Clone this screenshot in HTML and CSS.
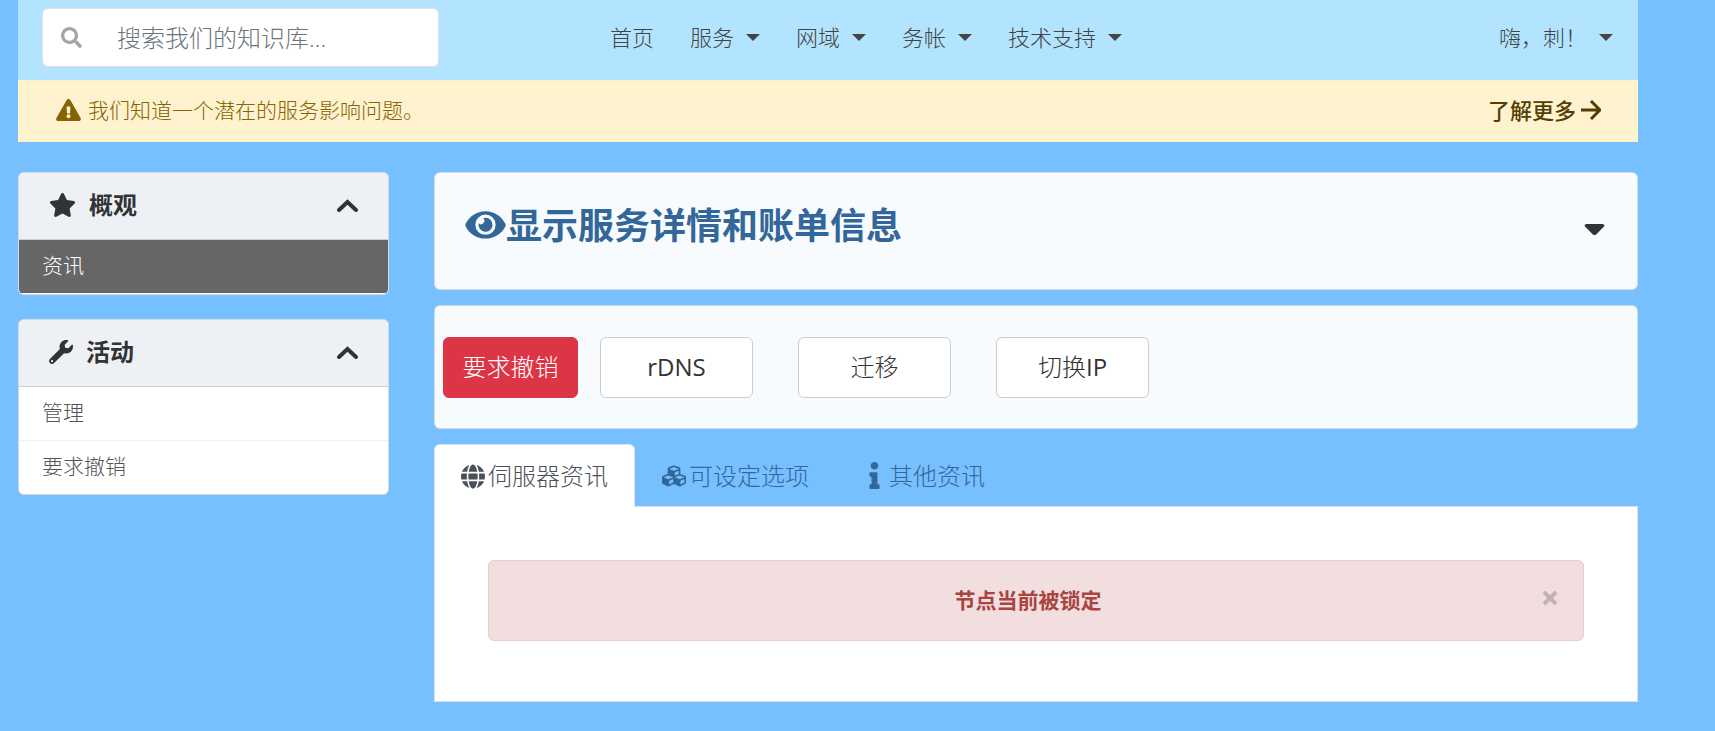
FILE: index.html
```html
<!DOCTYPE html>
<html lang="zh-CN">
<head>
<meta charset="utf-8">
<title>服务详情</title>
<link rel="stylesheet" href="styles.css">
</head>
<body>
<div class="page">
  <header class="topbar">
    <form class="search" role="search">
      <button class="search-button" type="submit" aria-label="搜索"><svg class="icon-search" viewBox="0 0 512 512"><path d="M505 442.7L405.3 343c-4.500-4.500-10.600-7-17-7H372c27.600-35.300 44-79.700 44-128C416 93.100 322.900 0 208 0S0 93.100 0 208s93.100 208 208 208c48.300 0 92.700-16.400 128-44v16.300c0 6.400 2.500 12.500 7 17l99.700 99.700c9.400 9.400 24.600 9.400 33.900 0l28.300-28.300c9.400-9.400 9.400-24.600.1-34zM208 336c-70.700 0-128-57.200-128-128 0-70.700 57.200-128 128-128 70.700 0 128 57.200 128 128 0 70.700-57.200 128-128 128z"/></svg></button>
      <input class="search-input" type="text" placeholder="搜索我们的知识库..." aria-label="搜索我们的知识库">
    </form>
    <nav class="nav">
      <a class="nav-link" href="#">首页</a>
      <a class="nav-link caret" href="#">服务</a>
      <a class="nav-link caret" href="#">网域</a>
      <a class="nav-link caret" href="#">务帐</a>
      <a class="nav-link caret" href="#">技术支持</a>
    </nav>
    <a class="nav-link caret account" href="#">嗨，刺！</a>
  </header>

  <div class="notice">
    <svg class="icon-warning" viewBox="0 0 576 512"><path d="M569.500 440C588 472 564.800 512 527.900 512H48.100c-36.900 0-60-40.100-41.600-72L246.400 24c18.500-32 64.700-32 83.200 0l239.900 416zM288 354c-25.400 0-46 20.600-46 46s20.600 46 46 46 46-20.600 46-46-20.600-46-46-46zm-43.700-165.300l7.400 136c.3 6.400 5.600 11.300 12 11.300h48.600c6.400 0 11.600-5 12-11.300l7.400-136c.4-6.900-5.100-12.700-12-12.700h-63.400c-6.900 0-12.400 5.800-12 12.700z"/></svg>
    <span class="notice-text">我们知道一个潜在的服务影响问题。</span>
    <a class="notice-more" href="#">了解更多<svg class="icon-arrow" viewBox="0 0 20 20"><path d="M0 10h18M10 1l9 9-9 9"/></svg></a>
  </div>

  <div class="columns">
    <aside class="sidebar">
      <section class="panel">
        <h3 class="panel-title"><svg class="icon-panel" viewBox="0 0 576 512"><path d="M259.300 17.800L194 150.200 47.900 171.500c-26.200 3.800-36.700 36.100-17.700 54.600l105.700 103-25 145.500c-4.500 26.300 23.200 46 46.400 33.700L288 439.600l130.700 68.700c23.200 12.200 50.900-7.400 46.400-33.700l-25-145.500 105.700-103c19-18.500 8.500-50.800-17.700-54.600L382 150.200 316.700 17.800c-11.700-23.600-45.600-23.900-57.400 0z"/></svg>概观
          <button class="toggle" type="button" aria-label="收起概观"><svg class="icon-chevron" viewBox="0 0 21 13"><path d="M2 11l8.500-8 8.500 8"/></svg></button></h3>
        <a class="panel-item active" href="#">资讯</a>
      </section>
      <section class="panel">
        <h3 class="panel-title"><svg class="icon-panel" viewBox="0 0 512 512"><path d="M507.700 109.100c-2.200-9-13.500-12.100-20.100-5.500l-74.400 74.400-67.900-11.300L334 98.900l74.400-74.400c6.600-6.600 3.400-17.900-5.700-20.200-47.400-11.700-99.600.9-136.600 37.900-39.600 39.600-50.500 97.100-34.100 147.200L18.700 402.800c-25 25-25 65.500 0 90.500s65.500 25 90.500 0l213.200-213.200c50.100 16.700 107.500 5.700 147.400-34.200 37.100-37.100 49.700-89.300 37.900-136.800zM64 472c-13.200 0-24-10.700-24-24 0-13.200 10.700-24 24-24s24 10.700 24 24c0 13.200-10.700 24-24 24z"/></svg>活动
          <button class="toggle" type="button" aria-label="收起活动"><svg class="icon-chevron" viewBox="0 0 21 13"><path d="M2 11l8.500-8 8.500 8"/></svg></button></h3>
        <a class="panel-item" href="#">管理</a>
        <a class="panel-item" href="#">要求撤销</a>
      </section>
    </aside>

    <main class="main">
      <section class="card details">
        <h2 class="details-title"><svg class="icon-eye" viewBox="0 0 576 512"><path fill-rule="evenodd" d="M288 60C165 60 58 132 4 240q-6 16 0 32c54 108 161 176 284 176s230-68 284-176q6-16 0-32C518 132 411 60 288 60zM288 108a144 144 0 1 1 0 288a144 144 0 1 1 0-288z"/><path d="M288 152a100 100 0 1 1-98 80a48 48 0 1 0 66-72q15-8 32-8z"/></svg>显示服务详情和账单信息</h2>
        <button class="expand" type="button" aria-label="展开"><svg class="icon-down" viewBox="0 0 22 13"><path d="M2 0h18q3 1 1 3l-8 8q-2 2-4 0L1 3Q-1 1 2 0z"/></svg></button>
      </section>

      <section class="card actions">
        <button class="button danger" type="button">要求撤销</button>
        <button class="button" type="button"><span class="latin">rDNS</span></button>
        <button class="button" type="button">迁移</button>
        <button class="button" type="button">切换<span class="latin">IP</span></button>
      </section>

      <section>
        <div class="tabs" role="tablist">
          <button class="tab selected" type="button" role="tab" aria-selected="true"><svg class="globe" viewBox="0 0 496 512"><path d="M336.500 160C322 70.700 287.800 8 248 8s-74 62.700-88.500 152h177zM152 256c0 22.200 1.200 43.500 3.300 64h185.300c2.100-20.500 3.300-41.800 3.300-64s-1.200-43.500-3.300-64H155.300c-2.100 20.500-3.300 41.800-3.300 64zm324.700-96c-28.600-67.900-86.500-120.400-158-141.600 24.400 33.800 41.200 84.700 50 141.600h108zM177.200 18.400C105.800 39.600 47.800 92.100 19.300 160h108c8.700-56.900 25.500-107.800 49.900-141.600zM487.400 192H372.700c2.100 21 3.300 42.500 3.300 64s-1.200 43-3.300 64h114.600c5.500-20.500 8.600-41.800 8.600-64s-3.100-43.500-8.500-64zM120 256c0-21.500 1.200-43 3.300-64H8.600C3.200 212.500 0 233.800 0 256s3.200 43.500 8.600 64h114.600c-2-21-3.200-42.500-3.200-64zm39.500 96c14.500 89.300 48.700 152 88.500 152s74-62.700 88.500-152h-177zm159.300 141.600c71.400-21.200 129.400-73.700 158-141.600h-108c-8.800 56.900-25.600 107.800-50 141.600zM19.300 352c28.600 67.900 86.500 120.400 158 141.600-24.400-33.800-41.200-84.700-50-141.600h-108z"/></svg>伺服器资讯</button>
          <button class="tab" type="button" role="tab" aria-selected="false"><svg class="cubes" viewBox="0 0 512 512"><path d="M488.600 250.200L392 214V105.500c0-15-9.300-28.400-23.400-33.700l-100-37.500c-8.100-3.100-17.100-3.100-25.300 0l-100 37.500c-14.100 5.300-23.400 18.700-23.400 33.700V214l-96.600 36.200C9.300 255.500 0 268.900 0 283.900V394c0 13.600 7.700 26.100 19.900 32.200l100 50c10.100 5.100 22.100 5.100 32.200 0l103.900-52 103.900 52c10.100 5.100 22.100 5.100 32.200 0l100-50c12.200-6.100 19.900-18.600 19.900-32.200V283.900c0-15-9.300-28.400-23.400-33.700zM358 214.800l-85 31.900v-68.200l85-37v73.300zM154 104.100l102-38.200 102 38.200v.6l-102 41.400-102-41.400v-.6zm84 291.100l-85 42.500v-79.100l85-38.800v75.400zm0-112l-102 41.400-102-41.400v-.6l102-38.200 102 38.200v.6zm240 112l-85 42.500v-79.100l85-38.800v75.400zm0-112l-102 41.400-102-41.400v-.6l102-38.200 102 38.200v.6z"/></svg>可设定选项</button>
          <button class="tab" type="button" role="tab" aria-selected="false"><svg class="info" viewBox="0 0 192 512"><path d="M20 424.200h20V279.800H20c-11 0-20-9-20-20V212c0-11 9-20 20-20h112c11 0 20 9 20 20v212.200h20c11 0 20 9 20 20V492c0 11-9 20-20 20H20c-11 0-20-9-20-20v-47.800c0-11 9-20 20-20zM96 0C56.200 0 24 32.200 24 72s32.200 72 72 72 72-32.200 72-72S135.800 0 96 0z"/></svg>其他资讯</button>
        </div>
        <div class="tab-body" role="tabpanel">
          <div class="alert" role="alert">
            <strong class="alert-text">节点当前被锁定</strong>
            <button class="close" type="button" aria-label="关闭"><svg class="icon-close" viewBox="0 0 16 16"><path d="M2 2l12 12M14 2L2 14"/></svg></button>
          </div>
        </div>
      </section>
    </main>
  </div>
</div>
</body>
</html>
```
FILE: styles.css
```css
* { box-sizing: border-box; }

body {
  margin: 0;
  background: #77c0ff;
  color: #333;
  font-family: "Open Sans", "Noto Sans CJK SC", sans-serif;
  font-size: 22px;
  font-weight: 300;
  line-height: 32px;
}

button, input { font: inherit; color: inherit; }
button { padding: 0; border: 0; background: none; cursor: pointer; }
a { color: inherit; text-decoration: none; }
svg { display: block; flex: none; fill: currentColor; }

.page { padding: 0 77px 28px 18px; }

.topbar {
  display: grid;
  grid-template-columns: 397px 1fr auto;
  align-items: center;
  height: 80px;
  padding: 0 25px 6px 24px;
  background: #b3e4ff;
}

.search {
  display: flex;
  align-items: center;
  height: 59px;
  background: #fff;
  border: 1px solid #dee2e6;
  border-radius: 6px;
}
.search-button { padding: 0 18px; color: #a5a5a5; }
.icon-search { width: 21px; height: 21px; }
.search-input {
  flex: 1;
  min-width: 0;
  height: 100%;
  padding: 0 17px;
  border: 0;
  outline: 0;
  background: none;
  font-size: 24px;
}
.search-input::placeholder { color: #6c757d; opacity: 1; }

.nav { display: flex; gap: 36px; padding-left: 171px; }
.nav-link { display: flex; align-items: center; color: #444; white-space: nowrap; }
.caret::after {
  content: "";
  margin-left: 12px;
  border: 7px solid transparent;
  border-top-color: #444;
  border-bottom: 0;
}

.notice {
  display: flex;
  align-items: center;
  gap: 7px;
  height: 62px;
  padding: 0 37px 2px 38px;
  background: #fff2cf;
  border-top: 1px solid #ffeeba;
  border-bottom: 1px solid #ffeeba;
  color: #856404;
}
.notice-text { font-size: 21px; }
.icon-warning { width: 25px; height: 22px; }
.notice-more {
  display: flex;
  align-items: center;
  gap: 5px;
  margin-left: auto;
  color: #533f03;
  font-weight: 500;
}
.icon-arrow { width: 20px; height: 20px; fill: none; stroke: currentColor; stroke-width: 3; }

.columns {
  display: grid;
  grid-template-columns: 371px minmax(0, 1fr);
  gap: 45px;
  align-items: start;
  margin-top: 30px;
}

.sidebar { display: grid; gap: 24px; }
.panel {
  overflow: hidden;
  background: #fff;
  border: 1px solid #d5dbe0;
  border-radius: 6px;
}
.panel-title {
  display: flex;
  align-items: center;
  gap: 13px;
  height: 67px;
  margin: 0;
  padding: 0 30px 2px;
  background: #edf1f5;
  border-bottom: 1px solid #ccd0d4;
  font-size: 24px;
  font-weight: 700;
}
.icon-panel { height: 24px; }
.toggle { margin-left: auto; }
.icon-chevron { width: 21px; height: 13px; fill: none; stroke: currentColor; stroke-width: 4; stroke-linecap: round; }
.panel-item { display: block; padding: 9px 23px 12px; color: #555; font-size: 21px; }
.panel-item + .panel-item { border-top: 1px solid #f2f2f2; }
.panel-item.active { background: #666; color: #fff; margin-bottom: 1px; }

.main { display: grid; gap: 15px; }
.card {
  background: #f7fbfe;
  border: 1px solid #d3d9de;
  border-radius: 6px;
}
.details {
  display: flex;
  justify-content: space-between;
  align-items: center;
  height: 118px;
  padding: 0 32px 10px 30px;
}
.details-title {
  display: flex;
  align-items: center;
  margin: 0;
  color: #336699;
  font-size: 36px;
  font-weight: 700;
}
.icon-eye { width: 41px; height: 36px; margin-bottom: 3px; }
.expand { padding-top: 7px; }
.icon-down { width: 21px; height: 12px; }

.actions {
  display: flex;
  align-items: center;
  gap: 45px;
  height: 124px;
  padding: 0 8px;
}
.button {
  width: 153px;
  height: 61px;
  background: #fff;
  border: 1px solid #ccc;
  border-radius: 6px;
  font-size: 24px;
}
.danger {
  width: 135px;
  margin-right: -23px;
  background: #dc3545;
  border-color: #dc3545;
  color: #fff;
}
.latin { font-weight: 400; }

.tabs { display: flex; }
.tab {
  display: flex;
  align-items: center;
  gap: 3px;
  height: 62px;
  padding: 0 26px;
  border: 1px solid transparent;
  border-bottom: 0;
  border-radius: 6px 6px 0 0;
  color: #336699;
  font-size: 24px;
}
.tab.selected {
  position: relative;
  height: 63px;
  margin-bottom: -1px;
  background: #fff;
  border-color: #dee2e6;
  color: #495057;
}
.globe { width: 24px; height: 27px; }
.cubes { width: 24px; height: 26px; }
.info { width: 23px; height: 27px; }
.tab-body { padding: 53px 53px 60px; background: #fff; border: 1px solid #dee2e6; }

.alert {
  display: flex;
  align-items: center;
  height: 81px;
  padding: 0 25px;
  background: #f2dede;
  border: 1px solid #ebccd1;
  border-radius: 6px;
  color: #a94442;
  font-size: 21px;
}
.alert-text { flex: 1; padding-bottom: 2px; text-align: center; font-weight: 700; }
.close { padding-bottom: 5px; color: #c2b2b2; }
.icon-close { width: 16px; height: 16px; stroke: currentColor; stroke-width: 4; }
```
